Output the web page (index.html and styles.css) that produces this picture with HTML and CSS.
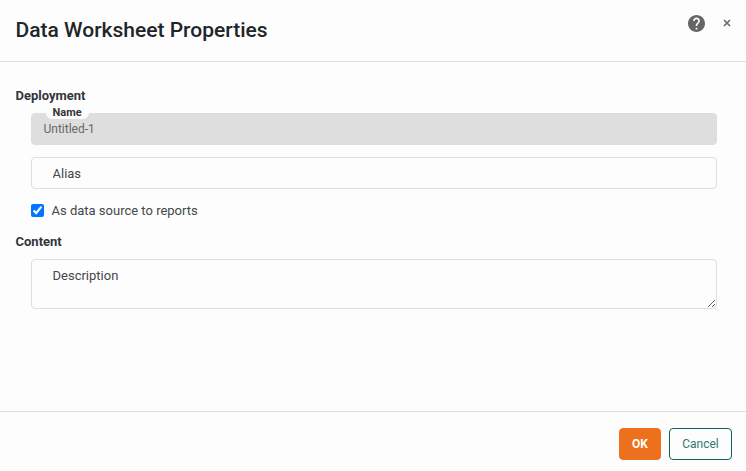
FILE: index.html
```html
<!DOCTYPE html>
<html lang="en">
<head>
<meta charset="utf-8">
<title>Data Worksheet Properties</title>
<link rel="stylesheet" href="styles.css">
</head>
<body>
<main class="dialog">
  <header class="header">
    <h1 class="title">Data Worksheet Properties</h1>
    <div class="actions">
      <svg class="help" viewBox="2 2 20 20" aria-label="Help"><path d="M12 2C6.48 2 2 6.48 2 12s4.48 10 10 10 10-4.480 10-10S17.520 2 12 2zm1 17h-2v-2h2v2zm2.070-7.750l-.9.920C13.450 12.900 13 13.500 13 15h-2v-.5c0-1.100.45-2.100 1.170-2.830l1.240-1.260c.37-.36.59-.86.59-1.410 0-1.100-.9-2-2-2s-2 .9-2 2H8c0-2.210 1.790-4 4-4s4 1.790 4 4c0 .88-.36 1.680-.93 2.250z"/></svg>
      <svg class="close" viewBox="0 0 8 8" aria-label="Close"><path d="M1 1l6 6M7 1L1 7"/></svg>
    </div>
  </header>
  <section class="body">
    <h2 class="section">Deployment</h2>
    <div class="fields">
      <div class="field">
        <label class="float" for="name">Name</label>
        <input class="input" id="name" value="Untitled-1" disabled>
      </div>
      <div class="field">
        <input class="input alias" placeholder="Alias">
      </div>
      <label class="check"><input class="box" type="checkbox" checked><span>As data source to reports</span></label>
    </div>
    <h2 class="section content">Content</h2>
    <div class="fields">
      <textarea class="input area" placeholder="Description"></textarea>
    </div>
  </section>
  <footer class="footer">
    <button class="btn ok">OK</button>
    <button class="btn cancel">Cancel</button>
  </footer>
</main>
</body>
</html>
```
FILE: styles.css
```css
* { box-sizing: border-box; }
body {
  margin: 0;
  background: #fdfdfd;
  font: 13px/20px Roboto, sans-serif;
  color: #33363b;
}
.dialog { height: 471px; display: flex; flex-direction: column; }
.header {
  height: 62px;
  flex: none;
  display: flex;
  justify-content: space-between;
  padding: 15px 15px 0 15.5px;
  border-bottom: 1px solid #dedede;
}
.title { margin: 0; font-size: 21px; line-height: 30px; font-weight: 500; color: #212529; }
.actions { display: flex; align-items: center; height: 16px; gap: 18.5px; }
.help { width: 17px; height: 17px; fill: #666; }
.close { width: 8px; height: 8px; fill: none; stroke: #6c6c6c; stroke-width: 1.7; }
.body { flex: 1; padding: 24px 15px 0 15.500px; }
.section { margin: 0; font-size: 13px; line-height: 20px; font-weight: 700; color: #33363b; }
.content { margin-top: 11px; }
.fields { padding: 7px 14px 0 15.5px; }
.field { position: relative; margin-bottom: 12px; }
.input {
  display: block;
  width: 100%;
  height: 32px;
  margin: 0;
  padding: 0 11.5px;
  border: 1px solid #dedede;
  border-radius: 4px;
  background: #fdfdfd;
  font: 13px/20px Roboto, sans-serif;
  color: #33363b;
}
.input:disabled { background: #dedede; color: #666; font-size: 12px; }
.input::placeholder { color: #44474b; opacity: 1; }
.alias { padding-left: 20.5px; }
.float {
  position: absolute;
  left: 15px;
  top: -7px;
  padding: 0 7px 0 6.5px;
  border-radius: 6px;
  background: #fdfdfd;
  font-size: 11px;
  line-height: 13px;
  font-weight: 700;
}
.check { display: flex; align-items: center; height: 20px; gap: 7.5px; color: #44474b; }
.box { width: 13px; height: 13px; margin: -1px 0 0; }
.area { height: 50px; padding: 6px 20.5px; resize: vertical; }
.footer {
  height: 60px;
  flex: none;
  display: flex;
  justify-content: flex-end;
  gap: 8px;
  padding: 16px 14px 0;
  border-top: 1px solid #dedede;
}
.btn {
  height: 32px;
  padding: 0;
  border: 1px solid;
  border-radius: 4px;
  font: 12px/18px Roboto, sans-serif;
}
.ok { width: 42px; border-color: #ed711c; background: #ed711c; color: #fdfdfd; font-weight: 700; }
.cancel { width: 63px; border-color: #12605b; background: #fdfdfd; color: #327772; }
```
